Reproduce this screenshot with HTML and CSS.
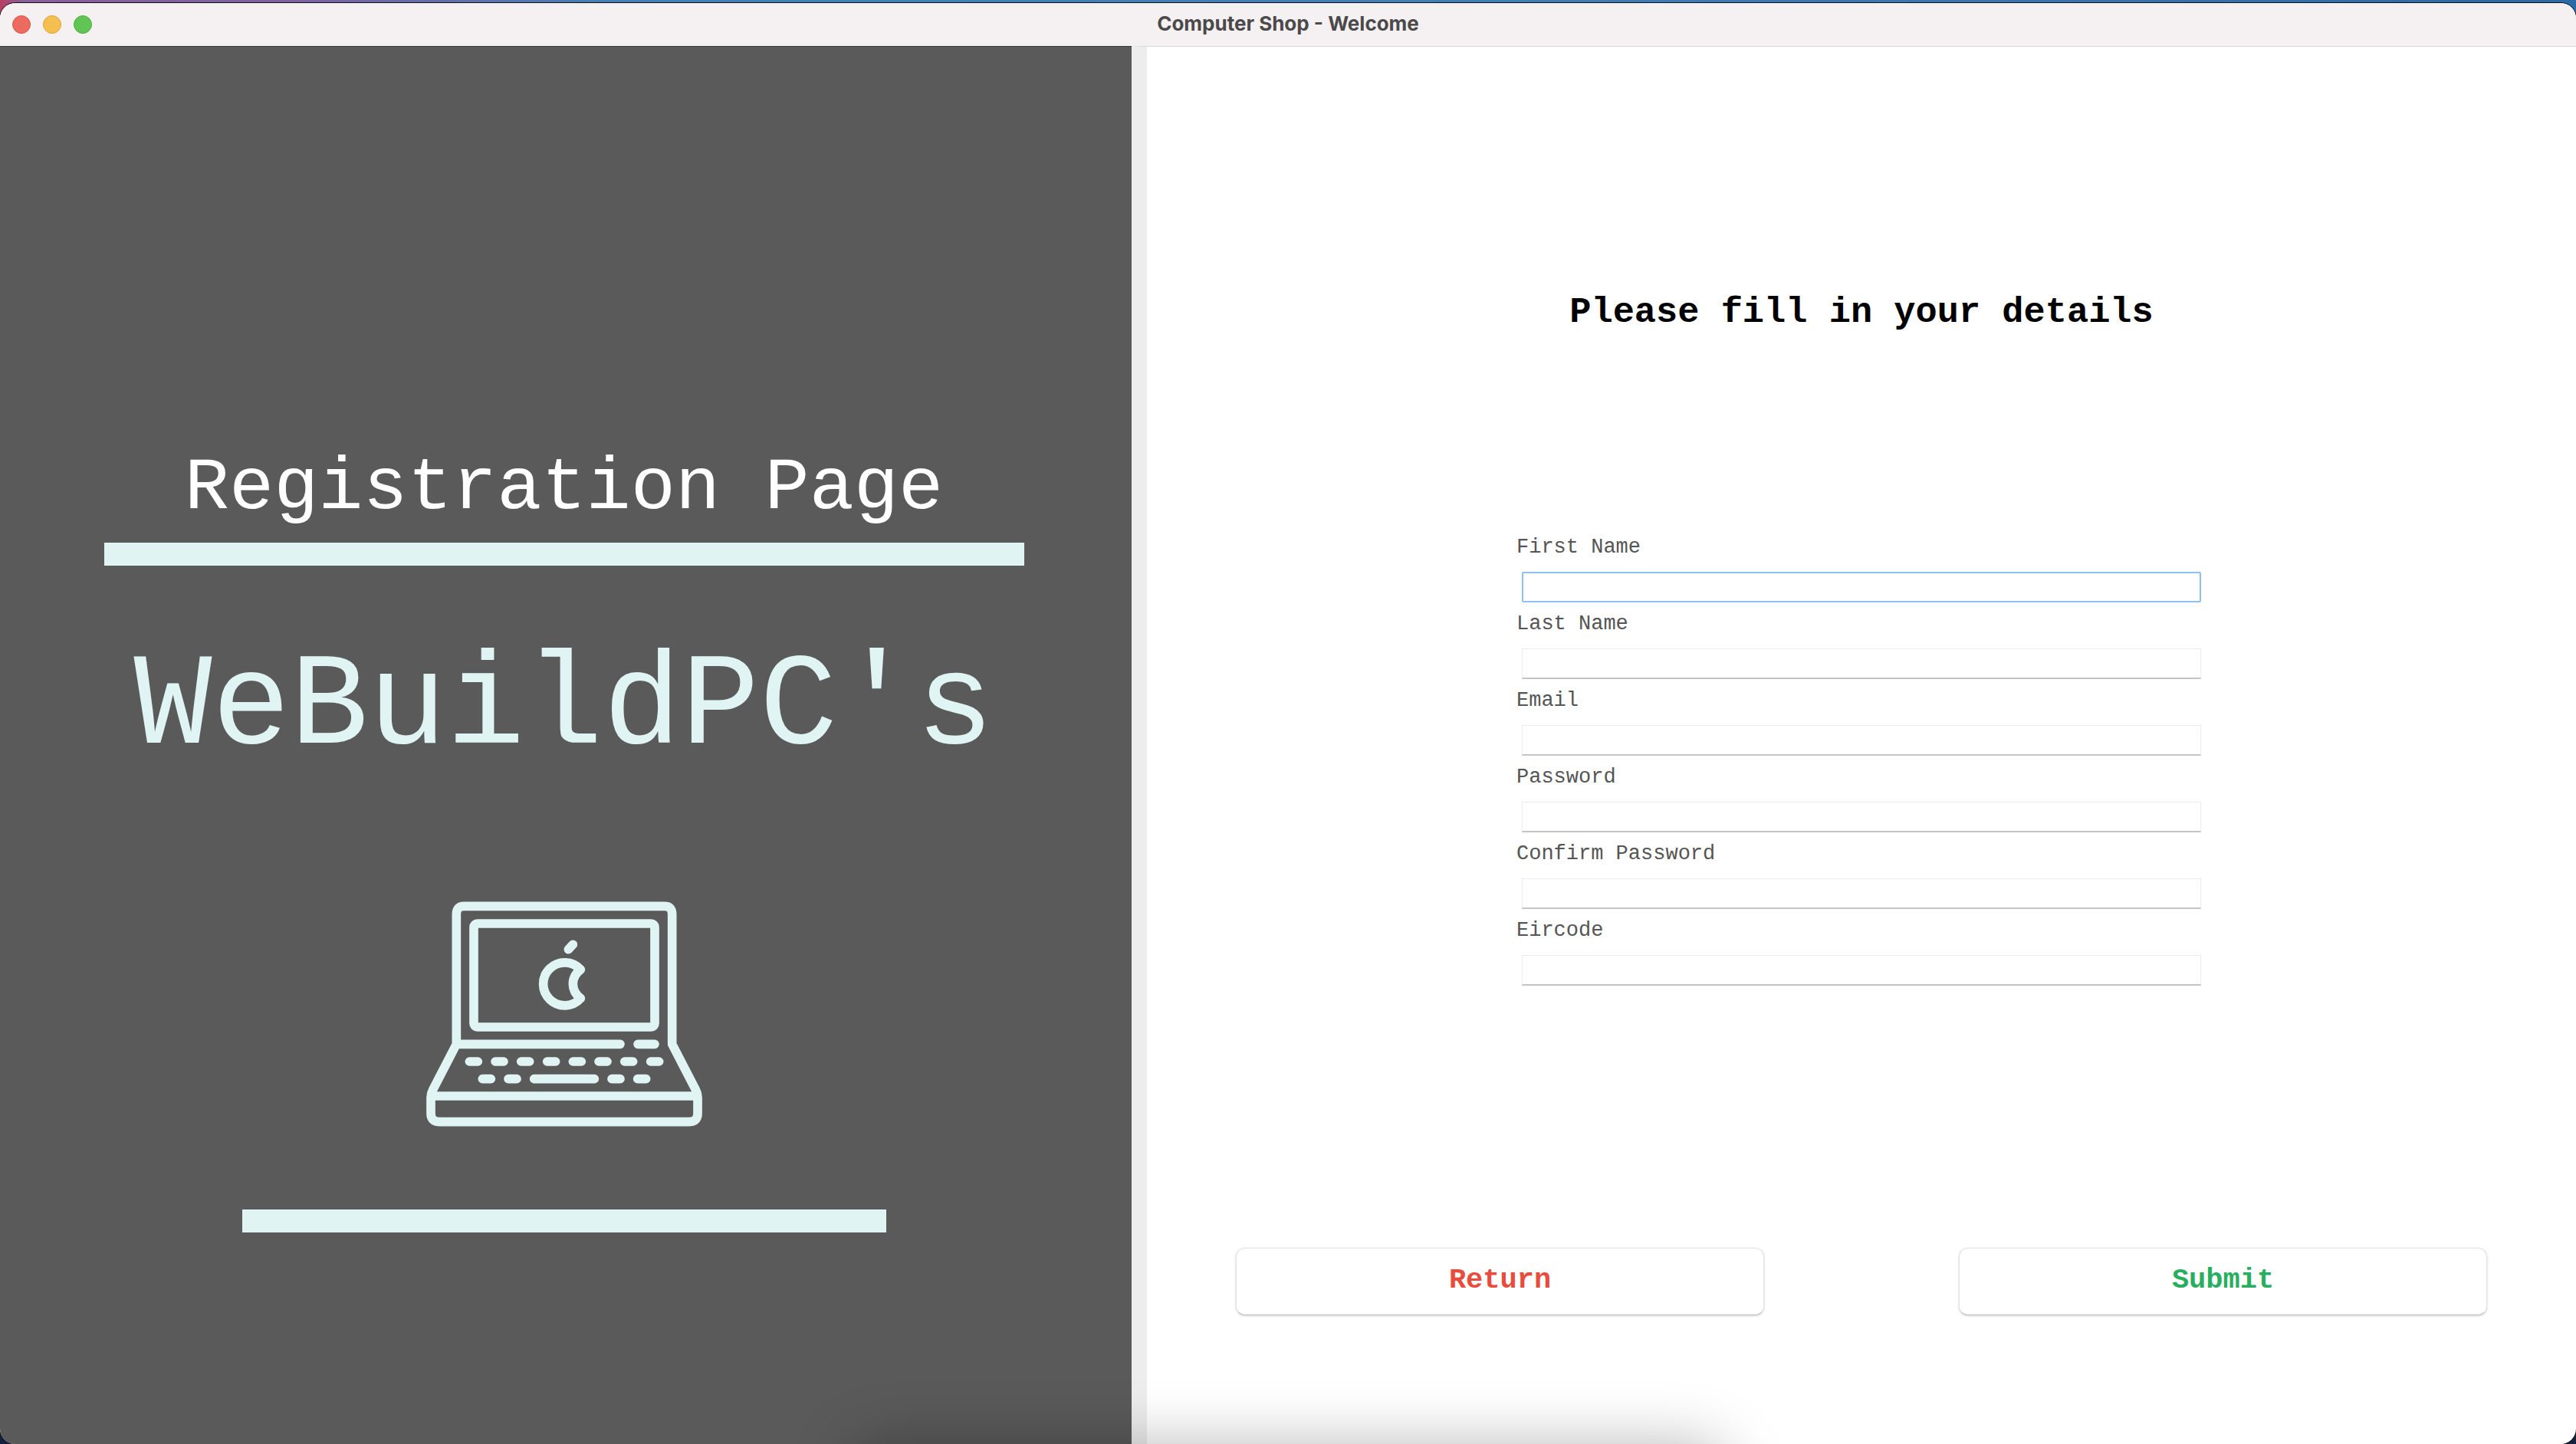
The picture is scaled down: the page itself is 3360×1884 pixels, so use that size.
FILE: index.html
```html
<!DOCTYPE html>
<html lang="en">
<head>
<meta charset="utf-8">
<title>Computer Shop - Welcome</title>
<link rel="stylesheet" href="styles.css">
</head>
<body>
<div class="window">
  <header class="titlebar">
    <div class="lights">
      <button class="light light-close" type="button" aria-label="Close"></button>
      <button class="light light-minimise" type="button" aria-label="Minimise"></button>
      <button class="light light-zoom" type="button" aria-label="Zoom"></button>
    </div>
    <span class="window-title">Computer Shop - Welcome</span>
  </header>
  <div class="content">
    <aside class="brand">
      <h1 class="page-title">Registration Page</h1>
      <div class="bar bar-long"></div>
      <p class="brand-name">WeBuildPC's</p>
      <svg class="laptop" viewBox="78 78 1080 882" fill="none" stroke="#e0f5f3" stroke-width="35" stroke-linecap="round" stroke-linejoin="round" aria-hidden="true">
        <path d="M196 637V128Q196 97 225 97H1011Q1040 97 1040 128V637L1132 815Q1140 830 1140 845V908Q1140 941 1105 941H131Q96 941 96 908V845Q96 830 104 815L196 637H837"/>
        <rect x="264" y="165" width="708" height="405" rx="14"/>
        <path d="M906 637H972M104 840H1132"/>
        <path d="M247 705H280M348 705H381M449 705H482M551 705H584M652 705H685M753 705H786M854 705H887M956 705H989"/>
        <path d="M298 773H331M399 773H432M500 773H736M804 773H837M905 773H938"/>
        <path d="M634 266L652 247"/>
        <path d="M682 345A84 84 0 1 0 682 458Q652 434 652 401T682 345Z"/>
      </svg>
      <div class="bar bar-short"></div>
    </aside>
    <main class="details">
      <h2 class="form-title">Please fill in your details</h2>
      <form class="form">
        <div class="fields">
          <label for="first-name">First Name</label>
          <input id="first-name" class="field-active" type="text">
          <label for="last-name">Last Name</label>
          <input id="last-name" type="text">
          <label for="email">Email</label>
          <input id="email" type="email">
          <label for="password">Password</label>
          <input id="password" type="password">
          <label for="confirm">Confirm Password</label>
          <input id="confirm" type="password">
          <label for="eircode">Eircode</label>
          <input id="eircode" type="text">
        </div>
        <div class="actions">
          <button class="action action-return" type="button">Return</button>
          <button class="action action-submit" type="submit">Submit</button>
        </div>
      </form>
    </main>
  </div>
  <div class="dock-shadow"></div>
</div>
</body>
</html>
```
FILE: styles.css
```css
* { box-sizing: border-box; margin: 0; }

body {
  min-height: 100vh;
  display: flex;
  padding-top: 4px;
  background: linear-gradient(90deg, #b83f62 0, #8a5f9c 30px, #7d62a2 400px, #4580b8 800px, #3f7fb8 60%, #2a6aa6 100%) top / 100% 60px no-repeat, #14213c;
  font-family: "Liberation Mono", "Courier New", monospace;
}

.window {
  position: relative;
  flex: 1;
  display: flex;
  flex-direction: column;
  overflow: hidden;
  border-radius: 20px;
  background: #fff;
  box-shadow: 0 0 0 1px #0b0f18;
}

.titlebar {
  display: grid;
  grid-template-columns: 1fr auto 1fr;
  align-items: center;
  height: 56px;
  padding: 0 16px;
  background: #f5f1f3;
}

.lights { display: flex; gap: 16px; }

.light {
  width: 24px;
  height: 24px;
  padding: 0;
  border: 1px solid;
  border-radius: 50%;
}
.light-close { background: #ed6a5e; border-color: #d8574c; }
.light-minimise { background: #f5bf4f; border-color: #dba33c; }
.light-zoom { background: #61c554; border-color: #4dae41; }

.window-title {
  padding-bottom: 2px;
  font: 700 26px/32px Inter, sans-serif;
  color: #4b494a;
}

.content {
  flex: 1;
  display: grid;
  grid-template-columns: 1476fr 1884fr;
}

.brand {
  display: flex;
  flex-direction: column;
  align-items: center;
  padding: 521px 5px 0 0;
  border-top: 1px solid #3a3a3a;
  background: #5a5a5a;
}

.page-title {
  font-size: 97px;
  line-height: 110px;
  font-weight: 400;
  color: #fff;
}

.bar { height: 30px; background: #e0f5f3; }
.bar-long { width: 1200px; margin-top: 16px; }
.bar-short { width: 840px; margin-top: 108px; }

.brand-name {
  margin-top: 90px;
  font-size: 170px;
  line-height: 192px;
  color: #e0f5f3;
}

.laptop { width: 360px; height: 294px; margin-top: 156px; }

.details {
  display: flex;
  flex-direction: column;
  align-items: center;
  padding: 319px 116px 0;
  border-top: 1px solid #d6d4d5;
  border-left: 20px solid #ededed;
}

.form-title {
  font-size: 47px;
  line-height: 56px;
  font-weight: 700;
  color: #000;
}

.form {
  align-self: stretch;
  display: flex;
  flex-direction: column;
  align-items: center;
  margin-top: 262px;
}

.fields {
  display: flex;
  flex-direction: column;
  width: 900px;
}

.fields label {
  margin-bottom: 16px;
  font-size: 27px;
  line-height: 32px;
  color: #555;
}

.fields input {
  height: 40px;
  margin: 0 7px 12px;
  padding: 0 8px;
  border: 1px solid #ebebeb;
  border-bottom: 2px solid #c4c4c4;
  outline: none;
  background: #fff;
  font: inherit;
  font-size: 27px;
}

.fields .field-active {
  border: 2px solid #8fc0f5;
  border-radius: 2px;
}

.actions {
  align-self: stretch;
  display: flex;
  justify-content: space-between;
  margin-top: 330px;
}

.action {
  width: 689px;
  height: 88px;
  padding: 0 0 4px;
  border: 1px solid #e2e2e2;
  border-bottom-color: #bdbdbd;
  border-radius: 12px;
  background: #fff;
  box-shadow: 0 1px 3px rgba(0, 0, 0, 0.18);
  font: inherit;
  font-size: 37px;
  font-weight: 700;
}
.action-return { color: #e74c3c; }
.action-submit { color: #27ae60; }

/* Shade that the dock casts over the lower edge of the window */
.dock-shadow {
  position: absolute;
  bottom: -200px;
  left: 33%;
  width: 34%;
  height: 200px;
  border-radius: 40px;
  box-shadow: 0 0 80px rgba(0, 0, 0, 0.27);
  pointer-events: none;
}
```
